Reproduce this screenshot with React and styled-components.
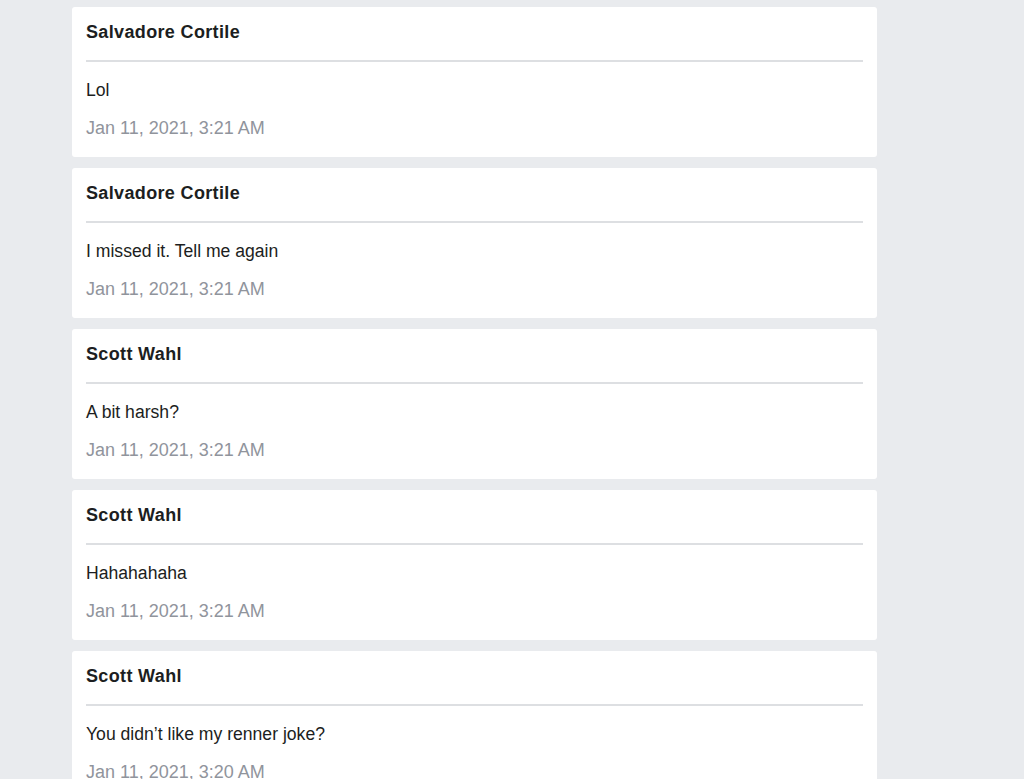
import React from 'react';
import styled, { createGlobalStyle } from 'styled-components';

const GlobalStyle = createGlobalStyle`
    html, body {
        margin: 0;
        padding: 0;
        background-color: #e9ebee;
        font-family: "Liberation Sans", Arial, sans-serif;
    }
`;

const Feed = styled.div`
    width: 805px;
    margin-left: 72px;
    padding-top: 7px;
    display: flex;
    flex-direction: column;
    gap: 11px;
`;

const Card = styled.div`
    background-color: #fff;
    border-radius: 3px;
    padding: 13px 14px 17px;
    display: flex;
    flex-direction: column;
`;

const Author = styled.div`
    font-size: 18px;
    line-height: 24px;
    font-weight: 700;
    letter-spacing: 0.35px;
    color: #1c1e21;
`;

const Divider = styled.hr`
    border: none;
    height: 2px;
    background-color: #dddfe2;
    margin: 16px 0 16px;
`;

const Body = styled.div`
    font-size: 17.6px;
    line-height: 24px;
    color: #1c1e21;
`;

const Time = styled.div`
    margin-top: 14px;
    font-size: 18px;
    line-height: 24px;
    color: #90949c;
`;

const comments = [
    { author: 'Salvadore Cortile', text: 'Lol', time: 'Jan 11, 2021, 3:21 AM' },
    { author: 'Salvadore Cortile', text: 'I missed it. Tell me again', time: 'Jan 11, 2021, 3:21 AM' },
    { author: 'Scott Wahl', text: 'A bit harsh?', time: 'Jan 11, 2021, 3:21 AM' },
    { author: 'Scott Wahl', text: 'Hahahahaha', time: 'Jan 11, 2021, 3:21 AM' },
    { author: 'Scott Wahl', text: 'You didn\u2019t like my renner joke?', time: 'Jan 11, 2021, 3:20 AM' },
];

const App = () => {
    return (
        <>
            <GlobalStyle />
            <Feed>
                {comments.map((c, i) => (
                    <Card key={i}>
                        <Author>{c.author}</Author>
                        <Divider />
                        <Body>{c.text}</Body>
                        <Time>{c.time}</Time>
                    </Card>
                ))}
            </Feed>
        </>
    );
};

export default App;
